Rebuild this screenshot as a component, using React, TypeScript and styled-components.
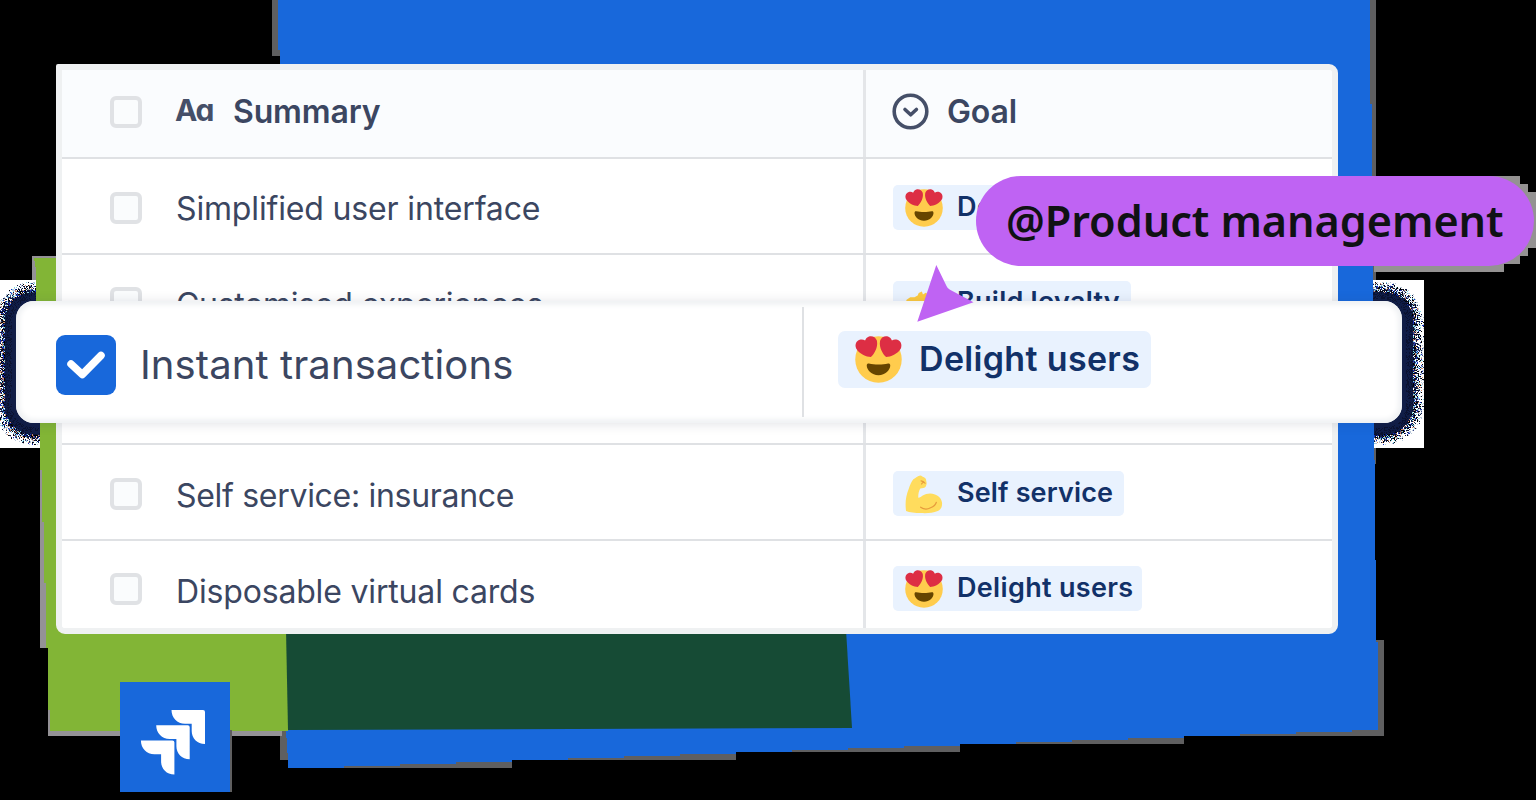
import React from 'react';
import styled, { createGlobalStyle } from 'styled-components';

const GlobalStyle = createGlobalStyle`
  *, *::before, *::after { box-sizing: border-box; }
  html, body { margin: 0; background: #000; }
  body { overflow: hidden; font-family: Inter, "Liberation Sans", sans-serif; }
`;

const Stage = styled.main`
  position: relative;
  width: 1536px;
  height: 800px;
  padding: 64px 0 0 56px;
  overflow: hidden;
  background: #000;
`;

const Backdrop = styled.svg`
  position: absolute;
  inset: 0;
  width: 1536px;
  height: 800px;
`;

const TableCard = styled.section`
  position: relative;
  width: 1282px;
  height: 570px;
  border: 6px solid #eff1f2;
  border-radius: 2px 9px 9px 9px;
  background: #fff;
  overflow: hidden;
`;

const Row = styled.div<{ $height: number; $header?: boolean }>`
  display: grid;
  grid-template-columns: 804px 1fr;
  height: ${p => p.$height}px;
  border-bottom: 2px solid #dfe1e4;
  background: ${p => (p.$header ? '#fafcfe' : '#fff')};
`;

const SummaryCell = styled.div<{ $nudge: number }>`
  display: flex;
  align-items: center;
  padding: ${p => Math.max(p.$nudge, 0)}px 0 ${p => Math.max(-p.$nudge, 0)}px 48px;
  border-right: 3px solid #e4e6e9;
`;

const GoalCell = styled.div<{ $nudge: number }>`
  display: flex;
  align-items: center;
  padding: ${p => Math.max(p.$nudge, 0)}px 0 ${p => Math.max(-p.$nudge, 0)}px 27px;
`;

const Checkbox = styled.span`
  flex: none;
  width: 32px;
  height: 32px;
  margin-right: 34px;
  border: 4px solid #e0e2e5;
  border-radius: 6px;
  background: #fafcfd;
`;

const HeaderText = styled.span`
  color: #3b4661;
  font-size: 32px;
  font-weight: 600;
  letter-spacing: -0.15px;
  line-height: 36px;
  margin-top: -1px;
`;

const TypeGlyph = styled.span`
  width: 58px;
  margin: -4px 0 0 -1px;
  color: #454f68;
  font-size: 30px;
  font-weight: 700;
  letter-spacing: -1.2px;
  line-height: 36px;
  font-feature-settings: 'cv11' 1;
`;

const GoalGlyph = styled.svg`
  width: 38px;
  height: 38px;
  margin: 0 17px 0 -1px;
`;

const RowText = styled.span<{ $tracking: number; $drop: number }>`
  margin-top: ${p => p.$drop}px;
  color: #3b4661;
  font-size: 32px;
  letter-spacing: ${p => p.$tracking}px;
  line-height: 38px;
  white-space: nowrap;
`;

const Tag = styled.span<{ $large?: boolean; $width: number }>`
  display: flex;
  align-items: center;
  width: ${p => p.$width}px;
  height: ${p => (p.$large ? 57 : 45)}px;
  padding-left: ${p => (p.$large ? 17 : 12)}px;
  border-radius: ${p => (p.$large ? 7 : 5)}px;
  background: #e9f2fe;
`;

const EmojiSvg = styled.svg<{ $large?: boolean }>`
  flex: none;
  width: ${p => (p.$large ? 47 : 38)}px;
  height: ${p => (p.$large ? 47 : 38)}px;
  margin-right: ${p => (p.$large ? 17 : 14)}px;
  overflow: visible;
`;

const TagText = styled.span<{ $large?: boolean; $tracking: number }>`
  margin-top: ${p => (p.$large ? -2 : -3)}px;
  color: #123168;
  font-size: ${p => (p.$large ? 34 : 27)}px;
  font-weight: 600;
  letter-spacing: ${p => p.$tracking}px;
  line-height: ${p => (p.$large ? 40 : 33)}px;
  white-space: nowrap;
`;

const FloatingRow = styled.section`
  position: absolute;
  left: 16px;
  top: 301px;
  display: grid;
  grid-template-columns: 788px 1fr;
  width: 1386px;
  height: 122px;
  padding: 6px 0;
  border-radius: 18px;
  background: #fff;
  box-shadow: inset 0 0 5px 4px #f0f2f4, 0 1px 12px rgba(40, 50, 70, 0.14);
`;

const FloatingSummary = styled.div`
  display: flex;
  align-items: center;
  padding: 5px 0 0 40px;
  border-right: 2px solid #dfe1e4;
`;

const FloatingGoal = styled.div`
  display: flex;
  align-items: center;
  padding: 0 0 5px 34px;
`;

const Checked = styled.span`
  display: grid;
  place-items: center;
  width: 60px;
  height: 60px;
  margin-right: 24px;
  border-radius: 9px;
  background: #1868db;
`;

const FloatingText = styled.span`
  color: #3b4661;
  font-size: 40px;
  letter-spacing: 0.1px;
  line-height: 48px;
  white-space: nowrap;
`;

const Mention = styled.div`
  position: absolute;
  left: 976px;
  top: 176px;
  display: flex;
  align-items: center;
  width: 558px;
  height: 90px;
  padding: 0 0 0 30px;
  border-radius: 45px;
  background: #bf63f3;
  color: #101214;
  font: 600 43.2px/60px "Noto Sans", "Open Sans", sans-serif;
  letter-spacing: -0.05px;
  white-space: nowrap;
`;

const Pointer = styled.svg`
  position: absolute;
  left: 916px;
  top: 264px;
  width: 60px;
  height: 60px;
`;

const Logo = styled.svg`
  position: absolute;
  left: 120px;
  top: 682px;
  width: 110px;
  height: 110px;
  background: #1868db;
`;

type EmojiName = 'love' | 'muscle' | 'star';

const HEART =
  'M16.65 3.281C15.791.85 13.126-.426 10.694.431c-1.476.52-2.521 1.711-2.928 3.104-1.191-.829-2.751-1.1-4.225-.58C1.111 3.813-.167 6.48.692 8.911c.122.344.284.663.472.958 1.951 3.582 7.588 6.1 11.001 6.131 2.637-2.167 5.446-7.665 4.718-11.677-.038-.348-.113-.698-.233-1.042z';

function Emoji({ name, large }: { name: EmojiName; large?: boolean }) {
  return (
    <EmojiSvg viewBox="0 0 36 36" $large={large} aria-hidden>
      {name === 'love' && (
        <>
          <circle cx="18" cy="18" r="17.8" fill="#ffcc4d" />
          <path d={HEART} fill="#dd2e44" />
          <path d={HEART} fill="#dd2e44" transform="translate(36 0) scale(-1 1)" />
          <path
            d="M18 21.849c-2.966 0-4.935-.346-7.369-.819-.557-.106-1.638 0-1.638 1.638 0 3.275 3.763 7.369 9.007 7.369s9.007-4.094 9.007-7.369c0-1.638-1.082-1.745-1.638-1.638-2.434.473-4.402.819-7.369.819"
            fill="#664500"
          />
        </>
      )}
      {name === 'muscle' && (
        <>
          <path
            d="M14.6.4c1.2.1 1.8 1.2 2.9 1.6 1.9.8 2.7 2 2.6 3.6.6 1.9.6 3.4-.4 5.2-.9 1.7-3.4 1.7-5.2 1.9-1.5 2.6-2.1 5.5-1.9 8.9 1.6-.3 2.9-1 4.2-2.1 3.2-1.8 7.4-2.6 11.6-1 4.3 1.6 6.5 4.8 6.7 8 .2 3.7-1.2 6.4-4.1 7.6-4.5 1.9-10 2.3-15.6 2-6-.2-11.2-.7-14.4-2C0 27 .7 19.8 3.4 13.5 4.8 9.5 6.3 5.8 7.9 4.1 10.1 3 12.1.5 14.6.4z"
            fill="#ffdc5d"
          />
          <path
            d="M14.8 30.5c3.5 2.6 6.6 2.2 9.4.6 2.7-1.1 4.8-2.6 5.5-5.3"
            fill="none"
            stroke="#e79b3c"
            strokeWidth="1.1"
            strokeLinecap="round"
          />
          <path
            d="M15.2 5.5c1.5.2 2.9 1.1 3.8 2.3M17.6 6.8c-.8.3-1.5.9-1.9 1.7"
            fill="none"
            stroke="#e79b3c"
            strokeWidth="1.1"
            strokeLinecap="round"
          />
        </>
      )}
      {name === 'star' && (
        <path
          d="M0 20 1.5 15 5 12.5 9 12.5 12 11 13 8.5 16 7 17 10 20 8l2.5 4 4 .5 1 4 4 2L31 20l-6 9-12 3z"
          fill="#fcc93f"
        />
      )}
    </EmojiSvg>
  );
}

/* Speckled glow behind the raised row, one pixel cell at a time. */
const SPECKLE = ['#ffffff', '#101d47', '#0b1230', '#000000', '#3d4a86', '#b9c8d8', '#d08a6a', '#1630c0', '#7fd8e8'];

function buildSpeckle(): string[] {
  const paths = SPECKLE.map(() => '');
  let seed = 20241;
  const rand = () => {
    seed = (Math.imul(seed, 1664525) + 1013904223) >>> 0;
    return seed / 4294967296;
  };
  const cx = 709;
  const cy = 363.5;
  const hw = 693;
  const hh = 60;
  const r = 18;
  const distance = (x: number, y: number) => {
    const qx = Math.abs(x - cx) - hw + r;
    const qy = Math.abs(y - cy) - hh + r;
    return Math.hypot(Math.max(qx, 0), Math.max(qy, 0)) + Math.min(Math.max(qx, qy), 0) - r;
  };
  for (const [x0, x1] of [[0, 42], [1373, 1424]]) {
    for (let y = 280; y < 448; y++) {
      for (let x = x0; x < x1; x++) {
        const d = distance(x + 0.5, y + 0.5);
        const light = Math.min(Math.max((d - 11) / 11, 0), 1) * 0.95;
        let c = 1;
        if (d >= 22) c = 0;
        else if (rand() < light) c = rand() < 0.82 ? 0 : 5;
        else if (d > 11) c = [1, 3, 3, 1, 2, 4, 6, 7, 8][Math.floor(rand() * 9)];
        else if (d > 4) c = rand() < 0.6 ? 1 : 2;
        paths[c] += `M${x} ${y}h1v1h-1z`;
      }
    }
  }
  return paths;
}

const speckle = buildSpeckle();

/* The lower edge of the blue shape climbs 2px every 56px. */
const stairs = Array.from({ length: 20 }, (_, k) => {
  const i = 19 - k;
  const x = 288 + i * 56;
  const y = 768 - i * 2;
  return `L${Math.min(x + 56, 1378)} ${y}L${x} ${y}`;
}).join('');

function Scene() {
  return (
    <Backdrop viewBox="0 0 1536 800" aria-hidden shapeRendering="crispEdges">
      <path
        d="M272 0h10v56h-10zM1366 0h10v280h-10zM1370 448h6v16h-6zM1374 640h10v96h-200v8H960v8H736v8H512v8H300v-8h-20v-40h1094z"
        fill="#5f5f60"
      />
      <path d="M32 256h24v26H32zM40 462h16v186H40zM48 640h234v96H48z" fill="#949296" />
      {speckle.map((d, i) => (
        <path key={SPECKLE[i]} d={d} fill={SPECKLE[i]} />
      ))}
      <path
        d={`M278 0H1370V104H1372V200H1373V330H1374V460H1375V560H1376V642H1378V730${stairs}V760L286 730L280 60V50H278z`}
        fill="#1868db"
      />
      <path d="M34 258H60V630H288V731H50V710H48V648H46V583H44V522H42V470H40V400H38V340H36V270z" fill="#82b536" />
      <path d="M286 630H846L852 728L288 730z" fill="#164b35" shapeRendering="auto" />
      <path d="M1480 176h40v8h8v8h8v56h-8v8h-8v8h-16v8H1374v-10z" fill="#949292" />
      <path d="M230 730h2v62h-2z" fill="#5f5f60" />
    </Backdrop>
  );
}

interface Item {
  text: string;
  height: number;
  tracking: number;
  drop: number;
  nudge: number;
  goal?: { emoji: EmojiName; label: string; width: number; tracking: number };
}

const items: Item[] = [
  {
    text: 'Simplified user interface', height: 96, tracking: -0.15, drop: 2, nudge: 3,
    goal: { emoji: 'love', label: 'Delight users', width: 249, tracking: 0.33 },
  },
  {
    text: 'Customised experiences', height: 95, tracking: -0.3, drop: 3, nudge: 3,
    goal: { emoji: 'star', label: 'Build loyalty', width: 238, tracking: 0.25 },
  },
  { text: '', height: 95, tracking: 0, drop: 0, nudge: 0 },
  {
    text: 'Self service: insurance', height: 96, tracking: -0.3, drop: 4, nudge: 3,
    goal: { emoji: 'muscle', label: 'Self service', width: 231, tracking: 0.15 },
  },
  {
    text: 'Disposable virtual cards', height: 96, tracking: -0.17, drop: 6, nudge: 1,
    goal: { emoji: 'love', label: 'Delight users', width: 249, tracking: 0.33 },
  },
];

export default function App() {
  return (
    <Stage>
      <GlobalStyle />
      <Scene />
      <TableCard>
        <Row $height={89} $header>
          <SummaryCell $nudge={-3}>
            <Checkbox />
            <TypeGlyph>Aa</TypeGlyph>
            <HeaderText>Summary</HeaderText>
          </SummaryCell>
          <GoalCell $nudge={-3}>
            <GoalGlyph viewBox="0 0 38 38" fill="none" stroke="#454f68" strokeWidth="3.6">
              <circle cx="18.5" cy="18.5" r="16.3" />
              <path d="M13 16.5l5.7 5.3 5.7-5.3" strokeLinecap="round" strokeLinejoin="round" />
            </GoalGlyph>
            <HeaderText>Goal</HeaderText>
          </GoalCell>
        </Row>
        {items.map((item, i) => (
          <Row key={i} $height={item.height}>
            <SummaryCell $nudge={item.nudge}>
              {item.text && <Checkbox />}
              {item.text && (
                <RowText $tracking={item.tracking} $drop={item.drop}>
                  {item.text}
                </RowText>
              )}
            </SummaryCell>
            <GoalCell $nudge={item.nudge}>
              {item.goal && (
                <Tag $width={item.goal.width}>
                  <Emoji name={item.goal.emoji} />
                  <TagText $tracking={item.goal.tracking}>{item.goal.label}</TagText>
                </Tag>
              )}
            </GoalCell>
          </Row>
        ))}
      </TableCard>

      <FloatingRow>
        <FloatingSummary>
          <Checked>
            <svg width="60" height="60" viewBox="0 0 60 60" fill="none" stroke="#fff" strokeWidth="7.5">
              <path d="M15 29l11.3 10.5L45 20.5" strokeLinecap="round" strokeLinejoin="round" />
            </svg>
          </Checked>
          <FloatingText>Instant transactions</FloatingText>
        </FloatingSummary>
        <FloatingGoal>
          <Tag $large $width={313}>
            <Emoji name="love" large />
            <TagText $large $tracking={0.33}>Delight users</TagText>
          </Tag>
        </FloatingGoal>
      </FloatingRow>

      <Mention>@Product management</Mention>
      <Pointer viewBox="916 264 60 60" aria-hidden>
        <path d="M936.3 265L946.5 286Q947.5 288.6 950 289.7L973.5 302.3L917.3 321.7z" fill="#bf63f3" />
      </Pointer>

      <Logo viewBox="120 682 110 110" fill="#fff" aria-label="Jira">
        {[0, 15.3, 30.6].map(o => (
          <path
            key={o}
            transform={`translate(${-o} ${o})`}
            d="M171.5 710h31.5q2 0 2 2V744c-8 0-13.3-6-13.3-13V723.7h-6.7c-7.7 0-13.5-6-13.5-13.7z"
          />
        ))}
      </Logo>
    </Stage>
  );
}
